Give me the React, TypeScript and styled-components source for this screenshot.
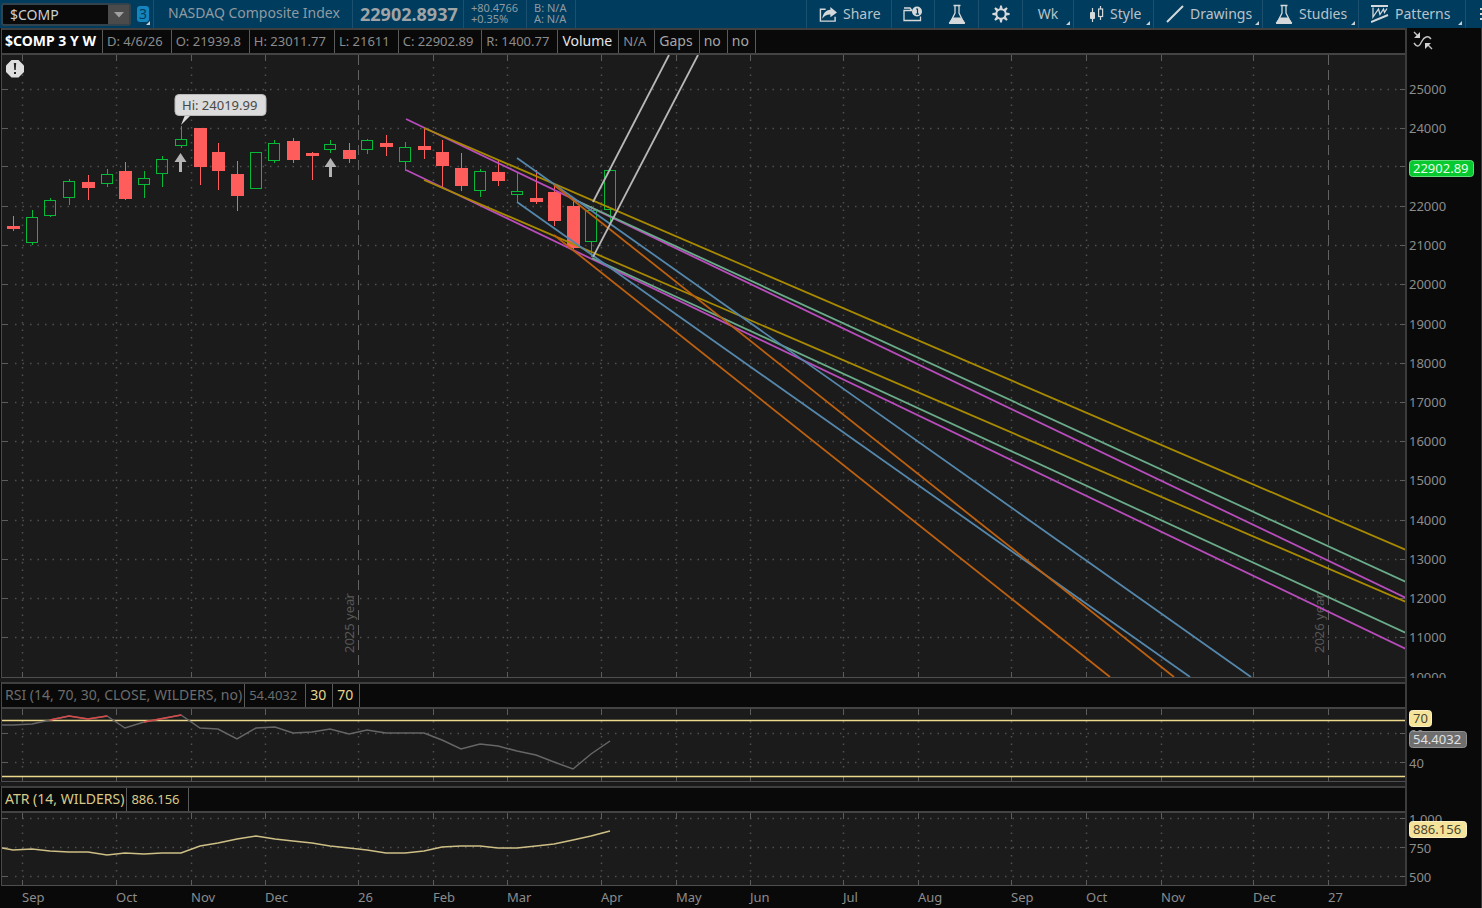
import React from "react";
import styled, { createGlobalStyle } from "styled-components";

const FONT = '"Noto Sans", "Open Sans", sans-serif';

const GlobalStyle = createGlobalStyle`
  * { box-sizing: border-box; }
  html, body { margin: 0; background: #090909; }
  body { font: 13px/18px ${FONT}; color: #8c8c8c; }
  svg { display: block; }
  svg text { font: 13px ${FONT}; }
`;

/* ---------- page frame ---------- */

const Page = styled.div`
  display: flex;
  flex-direction: column;
  min-height: 100vh;
  overflow: hidden;
`;

const TopBar = styled.header`
  display: flex;
  align-items: stretch;
  height: 28px;
  background: #003c5e;
  color: #8f9aa1;
  white-space: nowrap;
  overflow: hidden;
`;

const Workspace = styled.main`
  display: flex;
  flex-direction: column;
  border-right: 1px solid #3a3a3a;
`;

const Panel = styled.section`
  display: grid;
  grid-template-columns: minmax(0, 1fr) 74px;
`;

const PlotColumn = styled.div`
  margin-left: 1px;
  border-left: 1px solid #4a4a4a;
  border-right: 2px solid #3c3c3c;
  border-bottom: 1px solid #4e4e4e;
`;

const AxisColumn = styled.div`
  min-height: 0;
  overflow: hidden;
`;

const PanelGap = styled.div`
  height: 4px;
  margin-right: 74px;
  background: #1a1a1a;
  border-right: 2px solid #3c3c3c;
`;

const InfoBar = styled.div`
  display: flex;
  height: 27px;
  background: #090909;
  border-top: 2px solid #3f3f3f;
  border-bottom: 2px solid #444444;
  white-space: nowrap;
  overflow: hidden;
`;

const cellKinds = {
  symbol: { size: 14, left: 3, right: 6 },
  title: { size: 14, left: 3, right: 2 },
  word: { size: 14, left: 4, right: 6 },
  value: { size: 13, left: 4, right: 8 },
};

const InfoCell = styled.span<{ $kind?: keyof typeof cellKinds; $tone?: string }>`
  padding-top: 2px;
  padding-left: ${(p) => cellKinds[p.$kind ?? "value"].left}px;
  padding-right: ${(p) => cellKinds[p.$kind ?? "value"].right}px;
  border-right: 1px solid #5a5a5a;
  color: ${(p) => p.$tone ?? "#8c8c8c"};
  font-size: ${(p) => cellKinds[p.$kind ?? "value"].size}px;
  font-weight: ${(p) => (p.$kind === "symbol" ? 700 : 400)};
`;

const Plot = styled.svg<{ $tall?: boolean }>`
  width: 100%;
  height: ${(p) => (p.$tall ? 622 : 72)}px;
  background: #1b1b1b;
`;

const Axis = styled.svg<{ $tall?: boolean }>`
  width: 100%;
  height: ${(p) => (p.$tall ? 650 : 100)}px;
`;

const DateAxis = styled.svg`
  width: 100%;
  height: 22px;
`;

/* ---------- top bar parts ---------- */

const SymbolBox = styled.div`
  display: flex;
  width: 130px;
  height: 23px;
  margin: 3px 0 0 1px;
  border: 2px solid #33434d;
  border-radius: 3px;
  background: #0a0a0a;
`;

const SymbolInput = styled.input`
  flex: 1;
  min-width: 0;
  padding: 0 0 0 7px;
  border: 0;
  outline: 0;
  background: transparent;
  color: #cfcfcf;
  font: 14px/19px ${FONT};
`;

const DropButton = styled.button`
  display: flex;
  align-items: center;
  justify-content: center;
  width: 21px;
  padding: 0;
  border: 0;
  background: #4b4b4b;
`;

const LinkButton = styled.button`
  position: relative;
  display: flex;
  align-items: center;
  width: 23px;
  padding: 0 0 0 6px;
  border: 0;
  border-right: 1px solid #1b5070;
  background: none;
`;

const LinkNumber = styled.span`
  width: 12px;
  height: 16px;
  border-radius: 3px;
  background: #1585bd;
  color: #003c5e;
  font: 14px/16px ${FONT};
  text-align: center;
`;

const Corner = styled.span`
  position: absolute;
  right: 3px;
  bottom: 3px;
  border: 2px solid #c9d0d4;
  border-top-color: transparent;
  border-left-color: transparent;
`;

const QuoteName = styled.span`
  width: 199px;
  padding: 4px 0 0 14px;
  border-right: 1px solid #1b5070;
  font-size: 14px;
`;

const QuotePrice = styled.strong`
  width: 111px;
  padding: 5px 0 0 7px;
  border-right: 1px solid #1b5070;
  color: #a0a4a6;
  font-size: 18px;
`;

const QuoteStack = styled.span<{ $width: number }>`
  display: flex;
  flex-direction: column;
  width: ${(p) => p.$width}px;
  padding: 2px 0 0 7px;
  border-right: 1px solid #1b5070;
  font-size: 11px;
  line-height: 11px;
`;

const ToolGroup = styled.nav`
  display: flex;
  margin-left: auto;
  border-left: 1px solid #1b5070;
`;

const ToolButton = styled.button<{ $width: number; $align?: string }>`
  position: relative;
  display: flex;
  align-items: center;
  justify-content: ${(p) => p.$align ?? "flex-start"};
  gap: 6px;
  width: ${(p) => p.$width}px;
  padding: 0 0 0 ${(p) => (p.$align ? 0 : 12)}px;
  border: 0;
  border-right: 1px solid #1b5070;
  background: none;
  color: #b9c3c9;
  font: 14px/18px ${FONT};
  overflow: hidden;
  svg { flex: none; }
`;

const MoreButton = styled.button`
  width: 16px;
  padding: 0;
  border: 0;
  background: none;
  svg { margin-left: auto; }
`;

const ink = "#d6d9db";

const ShareIcon = () => (
  <svg width="18" height="20" viewBox="0 0 19 20">
    <path d="M7 5H1.5V17.5H17V13" fill="none" stroke={ink} strokeWidth="1.5" />
    <path d="M12 2.5L19 8.3L12 13.5V10.6C8.500 10.400 6 11.800 3.500 15C4 9.600 7 6 12 5.600Z" fill={ink} />
  </svg>
);

const WindowIcon = () => (
  <svg width="20" height="20" viewBox="0 0 20 20">
    <path d="M9 6.500H1V16.500H17.500V12.500M1 4H7L8.500 6" fill="none" stroke={ink} strokeWidth="1.3" />
    <circle cx="14" cy="7.500" r="5" fill={ink} />
    <path d="M13 5H14.500V10M12.800 10.200H16" fill="none" stroke="#003c5e" strokeWidth="1.2" />
  </svg>
);

const FlaskIcon = () => (
  <svg width="18" height="21" viewBox="0 0 18 21">
    <path d="M5.500 1.500H12.500M7 2V9L2 19H16L11 9V2" fill="none" stroke={ink} strokeWidth="1.3" />
    <path d="M4.800 13.500H13.200L17 18.500Q17.300 20 16 20H2Q.7 20 1 18.500Z" fill={ink} />
  </svg>
);

const GearIcon = () => (
  <svg width="18" height="18" viewBox="0 0 18 18">
    <circle cx="9" cy="9" r="4.700" fill="none" stroke={ink} strokeWidth="2" />
    {[0, 45, 90, 135, 180, 225, 270, 315].map((a) => (
      <path key={a} d="M7.400 4L8.100 .4H9.900L10.600 4Z" fill={ink} transform={`rotate(${a} 9 9)`} />
    ))}
  </svg>
);

const CandleIcon = () => (
  <svg width="18" height="18" viewBox="-3 0 18 18">
    <path d="M3.500 3V17M11.500 1V4M11.500 11V15" stroke={ink} strokeWidth="1.2" />
    <rect x="1" y="7" width="5" height="7" rx="1" fill={ink} />
    <rect x="9.600" y="4" width="4" height="7.500" fill="none" stroke={ink} strokeWidth="1.2" />
  </svg>
);

const LineIcon = () => (
  <svg width="18" height="18" viewBox="0 0 18 18">
    <path d="M1 17L17 1" stroke={ink} strokeWidth="2" />
  </svg>
);

const PatternIcon = () => (
  <svg width="18" height="20" viewBox="0 0 18 20">
    <path d="M0 2H17M0 18L17 11" stroke={ink} strokeWidth="2" fill="none" />
    <path d="M2 3.500V13L7.500 5L9 10.500L12.500 5L13.500 8.500L16 4.500" stroke={ink} strokeWidth="1.3" fill="none" />
  </svg>
);

/* ---------- chart data ---------- */

type Candle = { x: number; up?: boolean; hi: number; lo: number; top: number; bottom: number };

const up = (x: number, hi: number, lo: number, top: number, bottom: number): Candle => ({ x, up: true, hi, lo, top, bottom });
const down = (x: number, hi: number, lo: number, top: number, bottom: number): Candle => ({ x, hi, lo, top, bottom });

const candles: Candle[] = [
  down(13, 216, 231, 226, 228), up(32, 210, 245, 217, 242), up(50, 198, 217, 200, 215),
  up(69, 179, 205, 181, 197), down(88, 175, 200, 182, 187), up(107, 169, 187, 174, 183),
  down(125, 162, 200, 171, 198), up(144, 171, 198, 178, 184), up(162, 156, 187, 159, 173),
  up(181, 126, 148, 139, 145), down(200, 128, 185, 128, 166), down(218, 143, 190, 152, 170),
  down(237, 161, 211, 174, 195), up(256, 152, 188, 152, 188), up(274, 140, 163, 143, 160),
  down(293, 138, 163, 141, 159), down(312, 152, 180, 153, 155), up(330, 140, 153, 144, 149),
  down(349, 143, 163, 150, 158), up(367, 139, 154, 140, 149), down(386, 135, 156, 143, 146),
  up(405, 142, 171, 147, 161), down(424, 128, 159, 146, 149), down(442, 140, 187, 152, 165),
  down(461, 153, 191, 168, 185), up(480, 169, 197, 171, 190), down(498, 160, 186, 172, 180),
  up(517, 172, 202, 191, 194), down(536, 170, 204, 198, 201), down(554, 185, 226, 192, 220),
  down(573, 199, 249, 206, 247), up(591, 206, 257, 210, 241), up(610, 167, 223, 170, 209),
];

const months: [number, string][] = [
  [22, "Sep"], [116, "Oct"], [191, "Nov"], [265, "Dec"], [358, "26"], [433, "Feb"],
  [507, "Mar"], [601, "Apr"], [676, "May"], [750, "Jun"], [843, "Jul"], [918, "Aug"],
  [1011, "Sep"], [1086, "Oct"], [1161, "Nov"], [1253, "Dec"], [1328, "27"],
];

const priceLevels: [number, string][] = [
  [89, "25000"], [128, "24000"], [166, ""], [206, "22000"], [245, "21000"],
  [284, "20000"], [324, "19000"], [363, "18000"], [402, "17000"], [441, "16000"],
  [480, "15000"], [520, "14000"], [559, "13000"], [598, "12000"], [637, "11000"], [677, "10000"],
];

const trendLines: [string, number, number, number, number][] = [
  ["#b84cbc", 406, 119, 1406, 598], ["#b84cbc", 406, 170, 1406, 649],
  ["#a88a00", 424, 128, 1406, 550], ["#a88a00", 424, 180, 1406, 602],
  ["#6aab8a", 573, 199, 1406, 582], ["#6aab8a", 592, 258, 1406, 633],
  ["#5587ac", 517, 158, 1251, 677], ["#5587ac", 517, 202, 1190, 677],
  ["#bd6010", 554, 185, 1174, 677], ["#bd6010", 554, 235, 1110, 677],
  ["#b8b8b8", 593, 202, 669, 55], ["#b8b8b8", 593, 257, 698, 55],
];

const rsi = "2,725 13,725 32,724 50,720 69,716 88,719 107,716 125,728 144,722 181,715 200,728 218,729 237,739 256,728 275,727 293,733 312,732 330,729 349,734 367,730 386,733 424,733 442,740 461,749 480,744 498,746 517,751 536,755 554,762 573,769 591,754 610,741";
const rsiHot = ["50,720 69,716 88,719 107,716", "144,722 181,715"];
const atr = "2,848 13,850 32,849 50,851 69,852 88,852 107,855 125,853 144,854 162,853 181,853 200,846 218,843 237,839 256,836 275,839 293,841 312,843 330,846 349,848 367,850 386,853 405,853 424,851 442,847 461,846 480,846 498,848 517,848 536,846 554,844 573,840 591,836 610,831";

/* ---------- chart parts ---------- */

const GridDots = styled.line`
  stroke: #505050;
  stroke-width: 1.5;
  stroke-dasharray: 1.5 6;
`;

const Tick = styled.line`
  stroke: #5c5c5c;
  stroke-width: 1;
`;

const YearLine = styled.line`
  stroke: #626262;
  stroke-width: 1;
  stroke-dasharray: 10 5;
`;

const CandleShape = styled.g<{ $up?: boolean }>`
  stroke: ${(p) => (p.$up ? "#08b838" : "#ff5c5c")};
  fill: ${(p) => (p.$up ? "none" : "#ff5c5c")};
  shape-rendering: crispEdges;
`;

const Series = styled.polyline<{ $tone: string }>`
  fill: none;
  stroke: ${(p) => p.$tone};
  stroke-width: 1.5;
`;

const AxisText = styled.text`
  fill: #8c8c8c;
`;

function Grid({ top, height, levels, years }: { top: number; height: number; levels: number[]; years?: boolean }) {
  const bottom = top + height;
  return (
    <g>
      {levels.map((y) => (
        <g key={y}>
          <GridDots x1="15" x2="100%" y1={y + 0.5} y2={y + 0.5} />
          <Tick x1="2" x2="8" y1={y + 0.5} y2={y + 0.5} />
          <svg x="100%" overflow="visible">
            <Tick x1="-3" x2="2" y1={y + 0.5} y2={y + 0.5} />
          </svg>
        </g>
      ))}
      {months.map(([x, name]) =>
        years && /^\d/.test(name) ? (
          <YearLine key={x} x1={x + 0.5} x2={x + 0.5} y1={top} y2={bottom} />
        ) : (
          <g key={x}>
            <GridDots x1={x + 0.5} x2={x + 0.5} y1={top + 12} y2={bottom - 8} />
            <Tick x1={x + 0.5} x2={x + 0.5} y1={top} y2={top + 6} />
            <Tick x1={x + 0.5} x2={x + 0.5} y1={bottom - 5} y2={bottom} />
          </g>
        )
      )}
    </g>
  );
}

function CandleMark({ x, up: rising, hi, lo, top, bottom }: Candle) {
  return (
    <CandleShape $up={rising}>
      {hi < top && <line x1={x + 0.5} x2={x + 0.5} y1={hi} y2={top} />}
      {lo > bottom && <line x1={x + 0.5} x2={x + 0.5} y1={bottom + 1} y2={lo} />}
      <rect x={x - 5.5} y={top + 0.5} width={rising ? 11 : 12} height={bottom - top} />
    </CandleShape>
  );
}

function Arrow({ x, y }: { x: number; y: number }) {
  return <path d={`M${x} ${y}l6 9h-4.500v10h-3v-10h-4.500z`} fill="#b4b4b4" />;
}

function Badge({ y, width, text, fill, edge, tone }: { y: number; width: number; text: string; fill: string; edge: string; tone: string }) {
  return (
    <g>
      <rect x="2.500" y={y + 0.5} width={width} height="16" rx="3" fill={fill} stroke={edge} />
      <text x="6" y={y + 13} fill={tone}>{text}</text>
    </g>
  );
}

export default function App() {
  return (
    <>
      <GlobalStyle />
      <Page>
        <TopBar>
          <SymbolBox>
            <SymbolInput aria-label="Symbol" defaultValue="$COMP" />
            <DropButton aria-label="Choose symbol">
              <svg width="10" height="6" viewBox="0 0 10 6"><path d="M0 0H10L5 5.500Z" fill="#a0a0a0" /></svg>
            </DropButton>
          </SymbolBox>
          <LinkButton aria-label="Link group">
            <LinkNumber>3</LinkNumber>
            <Corner />
          </LinkButton>
          <QuoteName>NASDAQ Composite Index</QuoteName>
          <QuotePrice>22902.8937</QuotePrice>
          <QuoteStack $width={63}><span>+80.4766</span><span>+0.35%</span></QuoteStack>
          <QuoteStack $width={49}><span>B: N/A</span><span>A: N/A</span></QuoteStack>
          <ToolGroup aria-label="Chart tools">
            <ToolButton $width={85}><ShareIcon />Share</ToolButton>
            <ToolButton $width={43} $align="center" aria-label="Detach"><WindowIcon /></ToolButton>
            <ToolButton $width={44} $align="center" aria-label="Lab"><FlaskIcon /></ToolButton>
            <ToolButton $width={44} $align="center" aria-label="Settings"><GearIcon /></ToolButton>
            <ToolButton $width={51} $align="center">Wk<Corner /></ToolButton>
            <ToolButton $width={80}><CandleIcon />Style<Corner /></ToolButton>
            <ToolButton $width={109}><LineIcon />Drawings<Corner /></ToolButton>
            <ToolButton $width={96}><FlaskIcon />Studies<Corner /></ToolButton>
            <ToolButton $width={107}><PatternIcon />Patterns<Corner /></ToolButton>
            <MoreButton aria-label="More">
              <svg width="3" height="14" viewBox="0 0 3 14"><path d="M1 2H3M1 7H3M1 12H3" stroke={ink} strokeWidth="2" /></svg>
            </MoreButton>
          </ToolGroup>
        </TopBar>

        <Workspace>
          <Panel aria-label="Price">
            <PlotColumn>
              <InfoBar>
                <InfoCell $kind="symbol" $tone="#ffffff">$COMP 3 Y W</InfoCell>
                <InfoCell>D: 4/6/26</InfoCell>
                <InfoCell>O: 21939.8</InfoCell>
                <InfoCell>H: 23011.77</InfoCell>
                <InfoCell>L: 21611</InfoCell>
                <InfoCell>C: 22902.89</InfoCell>
                <InfoCell>R: 1400.77</InfoCell>
                <InfoCell $kind="word" $tone="#e6e6e6">Volume</InfoCell>
                <InfoCell>N/A</InfoCell>
                <InfoCell $kind="word" $tone="#a6a6a6">Gaps</InfoCell>
                <InfoCell $kind="word" $tone="#a6a6a6">no</InfoCell>
                <InfoCell $kind="word" $tone="#a6a6a6">no</InfoCell>
              </InfoBar>
              <Plot $tall>
                <g transform="translate(-2 -55)">
                  <Grid top={55} height={622} levels={priceLevels.slice(0, -1).map(([y]) => y)} years />
                  <text transform="translate(354 653) rotate(-90)" fill="#585858">2025 year</text>
                  <text transform="translate(1324 653) rotate(-90)" fill="#585858">2026 year</text>
                  {candles.map((c) => <CandleMark key={c.x} {...c} />)}
                  <Arrow x={180.5} y={153} />
                  <Arrow x={330.5} y={158} />
                  {trendLines.map(([tone, x1, y1, x2, y2]) => (
                    <line key={`${x1}-${y1}-${x2}`} x1={x1} y1={y1} x2={x2} y2={y2} stroke={tone} strokeWidth="1.800" />
                  ))}
                  <path d="M185 115L181 125L191 115Z" fill="#dcdcdc" />
                  <rect x="175" y="94.500" width="91" height="21" rx="4" fill="#dcdcdc" stroke="#b8b8b8" />
                  <text x="182" y="110" fill="#484848">Hi: 24019.99</text>
                  <path d="M11.500 60H18.500L24 65.500V72L18.500 77.500H11.500L6 72V65.500Z" fill="#dedede" />
                  <path d="M13.800 63H16.200L15.700 70H14.300ZM14 72H16V74H14Z" fill="#222222" />
                </g>
              </Plot>
            </PlotColumn>
            <AxisColumn>
              <Axis $tall>
                <g transform="translate(0 -28)">
                  <g fill="none" stroke="#c4c4c4" strokeWidth="1.400">
                    <path d="M7 43C11 49 13 45 15 41S21 35 24 39" />
                    <path d="M7 32L11 36M25 49L21 45" />
                  </g>
                  <path d="M13 32V38H7ZM18 43H24L18 49Z" fill="#d0d0d0" />
                  {priceLevels.map(([y, name]) => name && <AxisText key={name} x="2" y={y + 5}>{name}</AxisText>)}
                  <Badge y={160} width={64} text="22902.89" fill="#05c92f" edge="#5fdc78" tone="#e8ffe8" />
                </g>
              </Axis>
            </AxisColumn>
          </Panel>
          <PanelGap />

          <Panel aria-label="RSI">
            <PlotColumn>
              <InfoBar>
                <InfoCell $kind="title" $tone="#6c6c6c">RSI (14, 70, 30, CLOSE, WILDERS, no)</InfoCell>
                <InfoCell $tone="#6c6c6c">54.4032</InfoCell>
                <InfoCell $kind="word" $tone="#e6d58e">30</InfoCell>
                <InfoCell $kind="word" $tone="#e6d58e">70</InfoCell>
              </InfoBar>
              <Plot>
                <g transform="translate(-2 -709)">
                  <Grid top={709} height={72} levels={[733, 762]} />
                  <line x1="2" x2="110%" y1="720.500" y2="720.500" stroke="#ecd98c" strokeWidth="1.400" />
                  <line x1="2" x2="110%" y1="776.500" y2="776.500" stroke="#ecd98c" strokeWidth="1.400" />
                  <Series $tone="#666666" points={rsi} />
                  {rsiHot.map((points) => <Series key={points} $tone="#d84a4a" points={points} />)}
                </g>
              </Plot>
            </PlotColumn>
            <AxisColumn>
              <Axis>
                <g transform="translate(0 -682)">
                  <AxisText x="2" y="739">60</AxisText>
                  <AxisText x="2" y="768">40</AxisText>
                  <Badge y={710} width={22} text="70" fill="#f6e39a" edge="#fbf0c4" tone="#4c4730" />
                  <Badge y={731} width={57} text="54.4032" fill="#6e6e6e" edge="#929292" tone="#e2e2e2" />
                </g>
              </Axis>
            </AxisColumn>
          </Panel>
          <PanelGap />

          <Panel aria-label="ATR">
            <PlotColumn>
              <InfoBar>
                <InfoCell $kind="title" $tone="#d8c98a">ATR (14, WILDERS)</InfoCell>
                <InfoCell $tone="#d8c98a">886.156</InfoCell>
              </InfoBar>
              <Plot>
                <g transform="translate(-2 -813)">
                  <Grid top={813} height={72} levels={[818, 847, 876]} />
                  <Series $tone="#cdbf86" points={atr} />
                </g>
              </Plot>
            </PlotColumn>
            <AxisColumn>
              <Axis>
                <g transform="translate(0 -786)">
                  <AxisText x="2" y="824">1,000</AxisText>
                  <AxisText x="2" y="853">750</AxisText>
                  <AxisText x="2" y="882">500</AxisText>
                  <Badge y={821} width={57} text="886.156" fill="#f6e39a" edge="#fbf0c4" tone="#4c4730" />
                </g>
              </Axis>
            </AxisColumn>
          </Panel>

          <DateAxis aria-label="Date axis">
            {months.map(([x, name]) => <AxisText key={x} x={x} y="16">{name}</AxisText>)}
          </DateAxis>
        </Workspace>
      </Page>
    </>
  );
}
